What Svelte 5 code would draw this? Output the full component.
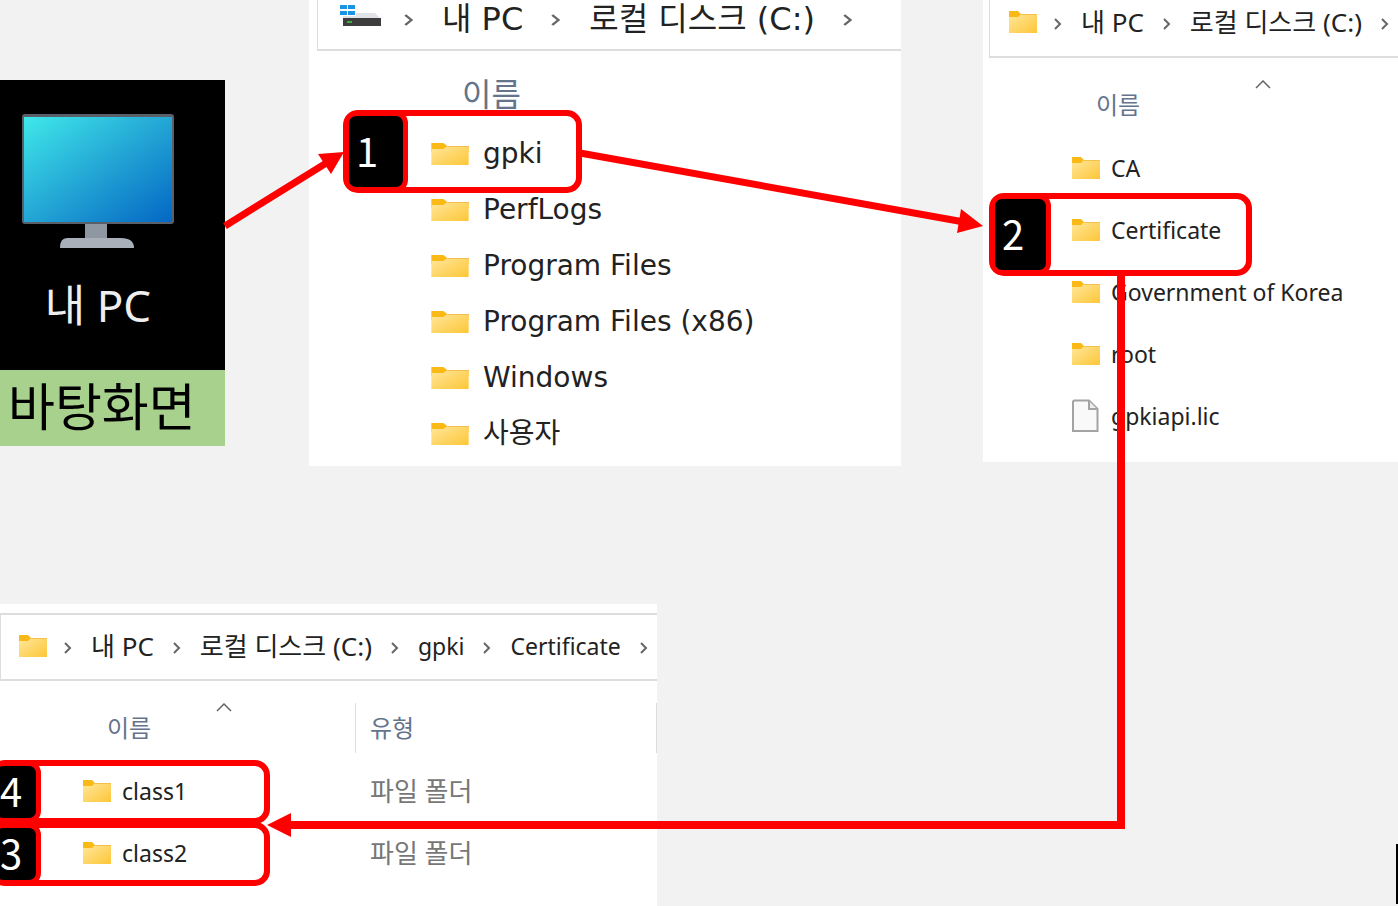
<script>
  const drive = {
    path: ['내 PC', '로컬 디스크 (C:)'],
    files: ['gpki', 'PerfLogs', 'Program Files', 'Program Files (x86)', 'Windows', '사용자'],
  };

  const gpki = {
    path: ['내 PC', '로컬 디스크 (C:)'],
    files: ['CA', 'Certificate', 'Government of Korea', 'root', 'gpkiapi.lic'],
  };

  const certificate = {
    path: ['내 PC', '로컬 디스크 (C:)', 'gpki', 'Certificate'],
    files: ['class1', 'class2'],
  };

  // order in which the folders are opened
  const steps = {
    gpki: 1,
    Certificate: 2,
    class2: 3,
    class1: 4,
  };

  const isLatin = text => /^[\x20-\x7e]+$/.test(text);
  const isFile = name => name.endsWith('.lic');
</script>

{#snippet folderIcon()}
  <svg class="icon" viewBox="0 0 30 24" preserveAspectRatio="none" aria-hidden="true">
    <path d="M1 1h9l3 3h16v6H1z" fill="#fbb917" />
    <path d="M1 7h9l3-3h16v19H1z" fill="url(#folder)" />
    <path d="M13 4.500h16" stroke="#f3c04a" />
  </svg>
{/snippet}

{#snippet fileIcon()}
  <svg class="icon file" viewBox="0 0 30 34" aria-hidden="true">
    <path d="M3 1.500h15l8.500 8.500v22H2V2.500z" fill="#f9f9f9" stroke="#a3a3a3" stroke-width="2" />
    <path d="M18 2v8h8" fill="#eee" stroke="#a3a3a3" stroke-width="2" />
  </svg>
{/snippet}

{#snippet driveIcon()}
  <svg class="drive-icon" viewBox="0 0 42 24" aria-hidden="true">
    <path d="M0 1h7v4H0zM8 1h7v4H8zM0 7h7v4H0zM8 7h7v4H8z" fill="#1a94e6" />
    <path d="M16 9h19l5 5H3v-2h13z" fill="#dfe3e8" />
    <path d="M3 14h38v8H3z" fill="#3d3d3d" />
    <path d="M7 17h5v2H7z" fill="#35b33c" />
  </svg>
{/snippet}

{#snippet separator()}
  <svg class="separator" viewBox="0 0 8 12" preserveAspectRatio="none" aria-hidden="true">
    <path d="M1 1l5 5-5 5" fill="none" stroke="#666" stroke-width="2" />
  </svg>
{/snippet}

{#snippet address(path, icon)}
  <nav class="address">
    {@render icon()}
    {@render separator()}
    {#each path as part}
      <span class="crumb" class:latin={isLatin(part)}>{part}</span>
      {@render separator()}
    {/each}
  </nav>
{/snippet}

{#snippet files(list, sorted, type)}
  <table>
    <thead>
      <tr>
        <th class="name">
          <div class="heading">
            이름
            {#if sorted}
              <svg class="sort" viewBox="0 0 16 9" aria-hidden="true">
                <path d="M1 8l7-7 7 7" fill="none" stroke="#666" stroke-width="1.500" />
              </svg>
            {/if}
          </div>
        </th>
        {#if type}
          <th><div class="heading type">유형</div></th>
        {/if}
      </tr>
    </thead>
    <tbody>
      {#each list as name}
        <tr>
          <td class="name">
            <div class="entry">
              {#if isFile(name)}
                {@render fileIcon()}
              {:else}
                {@render folderIcon()}
              {/if}
              <span>{name}</span>
            </div>
            {#if steps[name]}
              <div class="step"><b>{steps[name]}</b></div>
            {/if}
          </td>
          {#if type}
            <td class="type">{type}</td>
          {/if}
        </tr>
      {/each}
    </tbody>
  </table>
{/snippet}

<main>
  <div class="top">
    <figure class="desktop">
      <div class="screen">
        <svg viewBox="0 0 154 138" aria-hidden="true">
          <path d="M64 108h22v18H64z" fill="#8f97a3" />
          <path d="M46 125h54q13 0 13 10H39q0-10 7-10z" fill="#a9b0ba" />
          <rect x="1" y="1" width="152" height="110" rx="3" fill="#596069" />
          <rect x="3" y="4" width="148" height="105" fill="url(#display)" />
        </svg>
        <span>내 PC</span>
      </div>
      <figcaption>바탕화면</figcaption>
    </figure>

    <section class="window drive">
      {@render address(drive.path, driveIcon)}
      {@render files(drive.files)}
    </section>

    <section class="window gpki">
      {@render address(gpki.path, folderIcon)}
      {@render files(gpki.files, true)}
    </section>
  </div>

  <section class="window certificate">
    {@render address(certificate.path, folderIcon)}
    {@render files(certificate.files, true, '파일 폴더')}
  </section>

  <svg class="arrows" width="1398" height="906" aria-hidden="true">
    <defs>
      <linearGradient id="folder" x1="0" y1="0" x2="1" y2="1">
        <stop offset="0" stop-color="#ffe79c" />
        <stop offset="1" stop-color="#fdc637" />
      </linearGradient>
      <linearGradient id="display" x1="0" y1="0" x2="1" y2="1">
        <stop offset="0" stop-color="#3fe8ea" />
        <stop offset="0.500" stop-color="#23a6d5" />
        <stop offset="1" stop-color="#0467c4" />
      </linearGradient>
    </defs>
    <g fill="none" stroke="red" stroke-width="7">
      <path d="M225 226L328 162" />
      <path d="M580 153L964 222" />
      <path d="M1121 272V825H286" stroke-width="8" />
    </g>
    <path d="M344 152l-26 2 13 20zM983 226l-22-17-4 24zM267 825l24-12v24z" fill="red" />
  </svg>
  <div class="edge"></div>
</main>

<style>
  :global(body) {
    margin: 0;
    background: #f2f2f2;
  }

  main {
    position: relative;
    min-height: 100vh;
    display: flex;
    flex-direction: column;
    justify-content: space-between;
    align-items: flex-start;
    overflow: hidden;
    font-family: 'Noto Sans', 'Noto Sans CJK KR', sans-serif;
    font-size: 23px;
    color: #222;
  }

  .top {
    display: flex;
    align-items: flex-start;
    width: 100%;
  }

  .desktop {
    flex: 0 0 225px;
    margin: 80px 84px 0 0;
  }

  .screen {
    display: flex;
    flex-direction: column;
    align-items: center;
    box-sizing: border-box;
    height: 290px;
    padding: 33px 29px 0 0;
    background: #000;
    color: #eee;
    font-size: 44px;
    line-height: 60px;
  }

  .screen svg {
    width: 154px;
    margin-bottom: 24px;
  }

  figcaption {
    box-sizing: border-box;
    height: 76px;
    padding-left: 8px;
    background: #a9d18e;
    color: #000;
    font-size: 51px;
    line-height: 72px;
  }

  .window {
    background: #fff;
    --sort-gap: 65px;
  }

  .address {
    display: flex;
    align-items: center;
    box-sizing: border-box;
    height: 58px;
    padding: 0 0 12px 18px;
    border: solid #ddd;
    border-width: 0 0 2px 1px;
    white-space: nowrap;
  }

  .crumb {
    font-size: 26px;
    line-height: 36px;
  }

  .crumb.latin {
    font-size: 23px;
  }

  .separator {
    flex: none;
    width: 8px;
    height: 12px;
    margin: 3px 19px 0;
  }

  .icon {
    flex: none;
    width: 30px;
    height: 24px;
  }

  .icon.file {
    height: 34px;
  }

  .icon + .separator {
    margin-left: 16px;
  }

  table {
    width: 100%;
    border-collapse: collapse;
  }

  th {
    padding: 22px 0 7px;
    color: #64748c;
    font-size: 24px;
    font-weight: normal;
    text-align: left;
  }

  td {
    height: 62px;
    padding: 0;
  }

  td.name {
    position: relative;
  }

  .heading {
    display: flex;
    align-items: center;
    box-sizing: border-box;
    height: 50px;
    padding: 0 0 4px 107px;
  }

  .sort {
    align-self: flex-start;
    width: 16px;
    margin-left: var(--sort-gap);
  }

  .entry {
    display: flex;
    align-items: center;
    gap: 10px;
    padding-left: 82px;
    white-space: nowrap;
  }

  .step {
    position: absolute;
    top: -6px;
    left: 0;
    display: flex;
    box-sizing: border-box;
    width: 263px;
    height: 83px;
    border: 6px solid red;
    border-radius: 15px;
  }

  .step b {
    flex: 0 0 51px;
    box-sizing: border-box;
    display: flex;
    align-items: center;
    padding: 0 0 4px 7px;
    border-radius: 7px;
    background: #000;
    box-shadow: 0 0 0 5px red;
    color: #fff;
    font: 40px 'Noto Sans CJK KR', sans-serif;
    line-height: 48px;
  }

  .drive {
    flex: 0 0 592px;
    box-sizing: border-box;
    height: 466px;
    margin-right: 82px;
    padding-left: 8px;
    font-family: 'DejaVu Sans', 'Noto Sans CJK KR', sans-serif;
    font-size: 28px;
  }

  .drive .address {
    height: 51px;
    padding: 0 0 12px 22px;
  }

  .drive-icon {
    flex: none;
    width: 42px;
    height: 24px;
    margin-bottom: 6px;
  }

  .drive .crumb {
    font-size: 32px;
  }

  .drive .separator {
    width: 10px;
    margin: 3px 28px 0;
  }

  .drive .drive-icon + .separator {
    margin-left: 22px;
  }

  .drive th {
    padding: 18px 0 7px;
    font-size: 32px;
  }

  .drive td {
    height: 56px;
  }

  .drive .heading {
    padding-left: 145px;
  }

  .drive .entry {
    gap: 13px;
    padding-left: 113px;
    line-height: 36px;
  }

  .drive .icon {
    width: 40px;
  }

  .drive .step {
    top: -16px;
    left: 26px;
    width: 239px;
  }

  .drive .step b {
    flex-basis: 54px;
  }

  .gpki {
    flex: 1 0 409px;
    padding: 0 0 15px 6px;
    --sort-gap: 115px;
  }

  .certificate {
    box-sizing: border-box;
    width: 47%;
    min-width: 657px;
    padding: 9px 0 22px;
  }

  .certificate .address {
    height: 68px;
    padding: 0 0 2px 17px;
    border-top-width: 2px;
  }

  .certificate .name {
    width: 356px;
  }

  .certificate .heading {
    border-right: 1px solid #ddd;
  }

  .certificate .type {
    padding-left: 14px;
  }

  td.type {
    color: #777;
    font-size: 26px;
    line-height: 36px;
  }

  .certificate .step {
    top: 0;
    left: -10px;
    width: 280px;
    height: 64px;
  }

  .certificate .step b {
    flex-basis: 40px;
    padding-left: 4px;
  }

  .arrows {
    position: absolute;
    top: 0;
    left: 0;
  }

  .edge {
    position: absolute;
    right: 0;
    bottom: 2px;
    width: 2px;
    height: 60px;
    background: #000;
  }
</style>
